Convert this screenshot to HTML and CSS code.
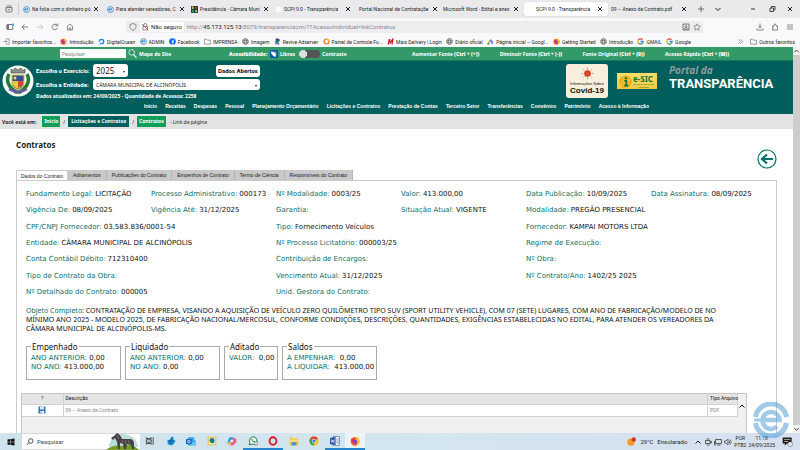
FILE: index.html
```
<!DOCTYPE html>
<html lang="pt-BR">
<head>
<meta charset="utf-8">
<title>SCPI 9.0 - Transparência</title>
<link rel="stylesheet" href="styles.css">
</head>
<body>
<svg class="sprite" aria-hidden="true">
  <symbol id="x" viewBox="0 0 8 8"><path d="M2 2l4 4M6 2l-4 4" stroke="currentColor" stroke-width="1"/></symbol>
  <symbol id="ring" viewBox="0 0 16 16"><circle cx="8" cy="8" r="6.7" fill="#fff" stroke="#4791cf" stroke-width="2.2"/><path d="M2 8h9.5a3.5 3.5 0 1 0-1 2.700" fill="none" stroke="#4791cf" stroke-width="2"/></symbol>
  <symbol id="globe" viewBox="0 0 16 16"><g fill="none" stroke="#55555c" stroke-width="1.5"><circle cx="8" cy="8" r="6.500"/><ellipse cx="8" cy="8" rx="3" ry="6.500"/><path d="M1.500 6h13M1.500 10h13"/></g></symbol>
  <symbol id="folder" viewBox="0 0 16 16"><path d="M1 3h5l2 2h7v9H1z" fill="none" stroke="#66666c" stroke-width="1.400"/></symbol>
  <symbol id="fox" viewBox="0 0 16 16"><circle cx="8" cy="8.500" r="7" fill="#ff5b2e"/><path d="M9 1c5 1 6 5 6 8a7 7 0 0 1-5 6c3-5 1-8-1-9z" fill="#ffbd2e"/><path d="M1.500 4l3 2 2-3 1 3-4 5z" fill="#f02d52"/><circle cx="8" cy="9" r="3.300" fill="#7b41d8"/></symbol>
  <symbol id="google" viewBox="0 0 16 16"><g fill="none" stroke-width="3"><path d="M12.500 4A6 6 0 0 0 2.800 5.200" stroke="#e94335"/><path d="M2.800 5.200a6 6 0 0 0 0 5.600" stroke="#fbbc04"/><path d="M2.800 10.800a6 6 0 0 0 9 2" stroke="#34a853"/><path d="M11.800 12.800A6 6 0 0 0 14 8H8" stroke="#4285f4"/></g></symbol>
  <symbol id="down" viewBox="0 0 8 8"><path d="M1.500 3L4 5.500 6.500 3" fill="none" stroke="currentColor"/></symbol>
  <symbol id="up" viewBox="0 0 8 8"><path d="M1.500 5.500L4 3l2.500 2.500" fill="none" stroke="currentColor"/></symbol>
  <symbol id="lens" viewBox="0 0 16 16"><circle cx="9.500" cy="6" r="4.500" fill="none" stroke="currentColor" stroke-width="1.500"/><path d="M6.300 9.200L1.500 14" stroke="currentColor" stroke-width="1.500"/></symbol>
</svg>

<header class="browser">
  <div class="tabstrip">
    <button class="tab-home" aria-label="Firefox View"><svg viewBox="0 0 16 16"><path d="M2 5h12v7q0 2-2 2H4q-2 0-2-2zM3 2h10M5.500 8l2.500 2 2.500-2" fill="none" stroke="#55555c" stroke-width="1.500"/></svg></button>
    <div class="tabs">
      <div class="tab"><svg class="fav"><use href="#ring"/></svg><a href="#">Na folia com o dinheiro pú</a><button aria-label="Fechar"><svg><use href="#x"/></svg></button></div>
      <div class="tab"><svg class="fav"><use href="#ring"/></svg><a href="#">Para atender vereadores, C</a><button aria-label="Fechar"><svg><use href="#x"/></svg></button></div>
      <div class="tab"><svg class="fav" viewBox="0 0 16 16"><path fill="#173a5e" d="M0 0h16v16H0z"/><path fill="#e7bd2c" d="M2 1h4v6H2zM10 9h4v5h-4z"/><path fill="#2f9b4b" d="M2 9h5v6H2z"/><path fill="#c43c32" d="M9 2h5v4H9z"/></svg><a href="#">Presidência - Câmara Muni</a><button aria-label="Fechar"><svg><use href="#x"/></svg></button></div>
      <div class="tab"><svg class="fav" viewBox="0 0 16 16"><circle cx="8" cy="8" r="7" fill="#fafafa"/></svg><a href="#">SCPI 9.0 - Transparência</a><button aria-label="Fechar"><svg><use href="#x"/></svg></button></div>
      <div class="tab"><a href="#">Portal Nacional de Contrataçõe</a><button aria-label="Fechar"><svg><use href="#x"/></svg></button></div>
      <div class="tab"><a href="#">Microsoft Word - Edital e anex</a><button aria-label="Fechar"><svg><use href="#x"/></svg></button></div>
      <div class="tab active"><svg class="fav"></svg><a href="#">SCPI 9.0 - Transparência</a><button aria-label="Fechar"><svg><use href="#x"/></svg></button></div>
      <div class="tab"><a href="#">09 – Anexo de Contrato.pdf</a><button aria-label="Fechar"><svg><use href="#x"/></svg></button></div>
    </div>
    <button class="tool" aria-label="Nova aba"><svg viewBox="0 0 8 8"><path d="M4 1v6M1 4h6" stroke="#55555c" stroke-width=".8"/></svg></button>
    <button class="tool" aria-label="Listar abas"><svg><use href="#down"/></svg></button>
    <div class="window-buttons">
      <button aria-label="Minimizar"><svg viewBox="0 0 8 8"><path d="M2 4h4" stroke="#333"/></svg></button>
      <button aria-label="Restaurar"><svg viewBox="0 0 8 8"><path d="M2 3h3.500v3.500H2zM3.500 3V1.500H7V5H5.500" fill="none" stroke="#333" stroke-width=".9"/></svg></button>
      <button aria-label="Fechar janela"><svg><use href="#x"/></svg></button>
    </div>
  </div>

  <div class="toolbar">
    <div class="nav-buttons">
      <button aria-label="Barra lateral"><svg viewBox="0 0 16 16"><rect x="1.500" y="3" width="12" height="10" rx="1.500" fill="none" stroke="#55555c" stroke-width="1.600"/><path d="M2 3h4v10H2z" fill="#77777d"/><circle cx="14" cy="3" r="2.200" fill="#13a5e8"/></svg></button>
      <button aria-label="Voltar"><svg viewBox="0 0 16 16"><path d="M14 8H2.500M7 3L2 8l5 5" fill="none" stroke="#55555c" stroke-width="1.500"/></svg></button>
      <button aria-label="Avançar"><svg viewBox="0 0 16 16"><path d="M2 8h11.500M9 3l5 5-5 5" fill="none" stroke="#bbbbc0" stroke-width="1.500"/></svg></button>
      <button aria-label="Recarregar"><svg viewBox="0 0 16 16"><path d="M13 9.500A5.500 5.500 0 1 1 12 4.500M13.500 1v4.500H9" fill="none" stroke="#55555c" stroke-width="1.500"/></svg></button>
      <button aria-label="Início"><svg viewBox="0 0 16 16"><path d="M1.500 8L8 2l6.500 6M3 7v7h10V7M6.500 14v-4h3v4" fill="none" stroke="#66666c" stroke-width="1.400"/></svg></button>
    </div>
    <div class="address">
      <svg viewBox="0 0 16 16"><path d="M8 1l6 2v4c0 4-2 6-6 8-4-2-6-4-6-8V3z" fill="none" stroke="#66666c" stroke-width="1.400"/></svg>
      <span class="security"><svg viewBox="0 0 16 16"><path d="M4 7h9v7H4zM5.500 7V4a3 3 0 0 1 6 0v3" fill="none" stroke="#66666c" stroke-width="1.500"/><path d="M2 2l13 13" stroke="#d8264e" stroke-width="1.600"/></svg>Não seguro</span>
      <span class="url">http://<b>45.173.125.13</b>:8079/transparenciacm/?7AcessoIndividual=lnkContratos</span>
      <svg viewBox="0 0 16 16"><path d="M2 2h12v12H2zM8 3v7M5 7l3 3 3-3M3 12h10" fill="none" stroke="#55555c" stroke-width="1.500"/></svg>
      <svg viewBox="0 0 16 16"><path d="M8 1.500l2 4.300 4.700.6-3.500 3.200.9 4.700L8 12l-4.100 2.300.9-4.700L1.300 6.400 6 5.800z" fill="none" stroke="#66666c" stroke-width="1.200"/></svg>
    </div>
    <div class="actions">
      <button aria-label="Downloads"><svg viewBox="0 0 16 16"><path d="M8 1v9M4.500 6.500L8 10l3.500-3.500M2 11v3h12v-3" fill="none" stroke="#55555c" stroke-width="1.400"/></svg></button>
      <button aria-label="Extensões"><svg viewBox="0 0 16 16"><path d="M3 6h3V4q0-2 2-2t2 2v2h3v8H3v-3q2 0 2-1.500T3 8z" fill="none" stroke="#55555c" stroke-width="1.400"/></svg></button>
      <button aria-label="Menu"><svg viewBox="0 0 16 16"><path d="M2 4h12M2 8h12M2 12h12" stroke="#55555c" stroke-width="1.300"/></svg></button>
    </div>
  </div>

  <nav class="bookmarks">
    <div class="bookmark-list">
      <a href="#"><svg viewBox="0 0 16 16"><path d="M6 2h8v12H6M1 8h8M6 5l3 3-3 3" fill="none" stroke="#66666c" stroke-width="1.400"/></svg>Importar favoritos...</a>
      <a href="#"><svg><use href="#fox"/></svg>Introdução</a>
      <a href="#"><svg viewBox="0 0 16 16"><path d="M3 8a5 5 0 1 1 5 5" fill="none" stroke="#1583ff" stroke-width="3"/><path d="M5 11h3v3H5zM3 13h2v2H3z" fill="#1583ff"/></svg>DigitalOcean</a>
      <a href="#"><svg><use href="#ring"/></svg>ADMIN</a>
      <a href="#"><svg viewBox="0 0 16 16"><circle cx="8" cy="8" r="7.500" fill="#0866ff"/><path d="M11 5H9.500Q8.500 5 8.500 6v9M6 8.500h5" fill="none" stroke="#fff" stroke-width="2"/></svg>Facebook</a>
      <a href="#"><svg><use href="#folder"/></svg>IMPRENSA</a>
      <a href="#"><svg><use href="#globe"/></svg>Imagem</a>
      <a href="#"><svg viewBox="0 0 16 16"><path d="M4 1h5q4 0 4 4t-4 4l4 6H9L6 9v6H3z" fill="#244a80"/><path d="M1 8l7-3v6z" fill="#3ca36d"/></svg>Revive Adserver</a>
      <a href="#"><svg viewBox="0 0 16 16"><circle cx="8" cy="8" r="5.500" fill="none" stroke="#f47b20" stroke-width="3"/><path d="M8 2.500a5.500 5.500 0 0 1 5.500 5.500" fill="none" stroke="#fbc02d" stroke-width="3"/></svg>Painel de Controle Fu...</a>
      <a href="#"><svg viewBox="0 0 16 16"><path d="M1 15L4 2h3l1 6 4-7h3l-2 14h-3l1-7-4 6H6L5 8l-1 7z" fill="#c21c24"/></svg>Mais Delivery | Login</a>
      <a href="#"><svg><use href="#globe"/></svg>Diário oficial</a>
      <a href="#"><svg viewBox="0 0 16 16"><path d="M3 13L8 4" stroke="#fbbc04" stroke-width="4"/><path d="M8 4l5 9" stroke="#4285f4" stroke-width="4"/><circle cx="3" cy="13" r="2.500" fill="#34a853"/></svg>Página inicial – Googl...</a>
      <a href="#"><svg><use href="#fox"/></svg>Getting Started</a>
      <a href="#"><svg><use href="#globe"/></svg>Introdução</a>
      <a href="#"><svg><use href="#google"/></svg>GMAIL</a>
      <a href="#"><svg><use href="#google"/></svg>Google</a>
    </div>
    <button aria-label="Mais favoritos"><svg viewBox="0 0 16 16"><path d="M3 3l5 5-5 5M8 3l5 5-5 5" fill="none" stroke="#66666c" stroke-width="1.400"/></svg></button>
    <a href="#"><svg><use href="#folder"/></svg>Outros favoritos</a>
  </nav>
</header>

<div class="viewport">
  <div class="page">
    <div class="access-bar">
      <form class="site-search"><input type="search" placeholder="Pesquisar" aria-label="Pesquisar no site"><button aria-label="Buscar" type="button"><svg viewBox="0 0 16 16"><circle cx="6.500" cy="6" r="5" fill="none" stroke="#fff" stroke-width="1.300"/><path d="M10 10l5 5.500" stroke="#fff" stroke-width="2"/></svg></button><a href="#">Mapa do Site</a></form>
      <div class="access-tools">
        <b>Acessibilidade:</b>
        <a href="#"><svg class="libras" viewBox="0 0 16 16"><rect width="16" height="16" rx="2" fill="#0b55a5"/><path d="M3 3l3 2 1-2 2 3 3 1-1 6-4-1-4-5zM10 3l3 2" fill="#fff" stroke="#fff"/></svg>Libras</a>
        <label class="contrast"><input type="checkbox">Contraste</label>
      </div>
      <div class="font-tools">
        <a href="#">Aumentar Fonte <b>(Ctrl + (+))</b></a>
        <a href="#">Diminuir Fonte <b>(Ctrl + (-))</b></a>
        <a href="#">Fonte Original <b>(Ctrl + (0))</b></a>
        <a href="#">Acesso Rápido <b>(Ctrl + (M))</b></a>
      </div>
    </div>

    <header class="masthead">
      <div class="masthead-main">
        <svg class="crest" viewBox="0 0 32 32"><circle cx="16" cy="16" r="15.500" fill="#f8f8f4"/><path d="M7 9q-5 10 7 18h4q12-8 7-18" fill="none" stroke="#257b3b" stroke-width="3.500"/><path d="M7 24q9 6 18 0" fill="none" stroke="#6a57a5" stroke-width="2.500"/><path d="M9 8V4l2 1.500L13 3l3 2 3-2 2 2.500L23 4v4z" fill="#8b918c" stroke="#3e4743" stroke-width=".6"/><path d="M10 10h12v9q-1 4-6 6-5-2-6-6z" fill="#304e9c" stroke="#d9c342"/><path d="M10.500 16h11v3q-2 3-5.500 5-4-2-5.500-5z" fill="#e9ce32"/><path d="M16 16h5v4l-5 3z" fill="#c94b3e"/><circle cx="13" cy="13" r="1.500" fill="#f1df60"/></svg>
        <div class="chooser">
          <div class="chooser-row"><label for="year">Escolha o Exercício:</label><span class="select year"><select id="year"><option>2025</option></select></span><button class="open-data">Dados Abertos</button></div>
          <div class="chooser-row"><label for="entity">Escolha a Entidade:</label><span class="select entity"><select id="entity"><option>CÂMARA MUNICIPAL DE ALCINÓPOLIS</option></select></span></div>
          <p>Dados atualizados em: 24/09/2025 - Quantidade de Acessos: 2258</p>
        </div>
        <a class="covid" href="#"><svg viewBox="0 0 16 16"><circle cx="8" cy="8" r="4" fill="#d8341e"/><path d="M8 1v14M1 8h14M3 3l10 10M13 3L3 13" stroke="#df5a3d" stroke-width="1" stroke-dasharray="1.500 1"/></svg><small>Informações Sobre</small><b>Covid-19</b></a>
        <a class="esic" href="#"><svg viewBox="0 0 16 16"><circle cx="8" cy="8" r="7" fill="#f6b91d" stroke="#e19818"/><path d="M4 13l-1 3 4-2z" fill="#e9a91b"/><circle cx="8.500" cy="4" r="1.500" fill="#16713b"/><path d="M6.500 7H9v6M6.500 13h5" fill="none" stroke="#16713b" stroke-width="2"/></svg><span><b>e-SIC</b><small>Serviço de Informação<br>ao Cidadão</small></span></a>
        <div class="brand"><i>Portal da</i><b>TRANSPARÊNCIA</b></div>
      </div>
      <nav class="menu">
        <a href="#">Início</a><a href="#">Receitas</a><a href="#">Despesas</a><a href="#">Pessoal</a><a href="#">Planejamento Orçamentário</a><a href="#">Licitações e Contratos</a><a href="#">Prestação de Contas</a><a href="#">Terceiro Setor</a><a href="#">Transferências</a><a href="#">Convênios</a><a href="#">Patrimônio</a><a href="#">Acesso à Informação</a>
      </nav>
    </header>

    <nav class="crumbs"><b>Você está em:</b><a href="#">Início</a><span>/</span><a class="dark" href="#">Licitações e Contratos</a><span>/</span><a href="#">Contratos</a><span class="here">- Link da página</span></nav>

    <main>
      <div class="title-row">
        <h1>Contratos</h1>
        <button class="back" aria-label="Voltar à página anterior"><svg viewBox="0 0 20 20"><circle cx="10" cy="10" r="9" fill="#fff" stroke="#08706c" stroke-width="1.200"/><path d="M16 10H5.500M10 5.500L5 10l5 4.500" fill="none" stroke="#08706c" stroke-width="2.200"/></svg></button>
      </div>
      <div class="panel-tabs">
        <button class="current">Dados do Contrato</button><button>Aditamentos</button><button>Publicações do Contrato</button><button>Empenhos de Contrato</button><button>Termo de Ciência</button><button>Responsíveis do Contrato</button>
      </div>
      <section class="panel">
        <dl class="fields">
          <div><dt>Fundamento Legal:</dt><dd>LICITAÇÃO</dd></div>
          <div><dt>Processo Administrativo:</dt><dd>000173</dd></div>
          <div><dt>Nº Modalidade:</dt><dd>0003/25</dd></div>
          <div><dt>Valor:</dt><dd>413.000,00</dd></div>
          <div><dt>Data Publicação:</dt><dd>10/09/2025</dd></div>
          <div><dt>Data Assinatura:</dt><dd>08/09/2025</dd></div>
          <div><dt>Vigência De:</dt><dd>08/09/2025</dd></div>
          <div><dt>Vigência Até:</dt><dd>31/12/2025</dd></div>
          <div><dt>Garantia:</dt><dd></dd></div>
          <div><dt>Situação Atual:</dt><dd>VIGENTE</dd></div>
          <div class="wide"><dt>Modalidade:</dt><dd>PREGÃO PRESENCIAL</dd></div>
          <div class="wide"><dt>CPF/CNPJ Fornecedor:</dt><dd>03.583.836/0001-54</dd></div>
          <div class="wide"><dt>Tipo:</dt><dd>Fornecimento Veículos</dd></div>
          <div class="wide"><dt>Fornecedor:</dt><dd>KAMPAI MOTORS LTDA</dd></div>
          <div class="wide"><dt>Entidade:</dt><dd>CÂMARA MUNICIPAL DE ALCINÓPOLIS</dd></div>
          <div class="wide"><dt>Nº Processo Licitatório:</dt><dd>000003/25</dd></div>
          <div class="wide"><dt>Regime de Execução:</dt><dd></dd></div>
          <div class="wide"><dt>Conta Contábil Débito:</dt><dd>712310400</dd></div>
          <div class="wide"><dt>Contribuição de Encargos:</dt><dd></dd></div>
          <div class="wide"><dt>Nº Obra:</dt><dd></dd></div>
          <div class="wide"><dt>Tipo de Contrato da Obra:</dt><dd></dd></div>
          <div class="wide"><dt>Vencimento Atual:</dt><dd>31/12/2025</dd></div>
          <div class="wide"><dt>Nº Contrato/Ano:</dt><dd>1402/25 2025</dd></div>
          <div class="wide"><dt>Nº Detalhado do Contrato:</dt><dd>000005</dd></div>
          <div class="wide"><dt>Unid. Gestora do Contrato:</dt><dd></dd></div>
        </dl>
        <p class="object"><span>Objeto Completo:</span> CONTRATAÇÃO DE EMPRESA, VISANDO A AQUISIÇÃO DE VEÍCULO ZERO QUILÔMETRO TIPO SUV (SPORT UTILITY VEHICLE), COM 07 (SETE) LUGARES, COM ANO DE FABRICAÇÃO/MODELO DE NO MÍNIMO ANO 2025 - MODELO 2025, DE FABRICAÇÃO NACIONAL/MERCOSUL, CONFORME CONDIÇÕES, DESCRIÇÕES, QUANTIDADES, EXIGÊNCIAS ESTABELECIDAS NO EDITAL, PARA ATENDER OS VEREADORES DA CÂMARA MUNICIPAL DE ALCINÓPOLIS-MS.</p>
        <div class="totals">
          <fieldset><legend>Empenhado</legend><p><span>ANO ANTERIOR:</span> 0,00</p><p><span>NO ANO:</span> 413.000,00</p></fieldset>
          <fieldset><legend>Liquidado</legend><p><span>ANO ANTERIOR:</span> 0,00</p><p><span>NO ANO:</span> 0,00</p></fieldset>
          <fieldset class="narrow"><legend>Aditado</legend><p><span>VALOR:</span>&nbsp; 0,00</p></fieldset>
          <fieldset><legend>Saldos</legend><p><span>A EMPENHAR:</span>&nbsp; 0,00</p><p><span>A LIQUIDAR:</span>&nbsp; 413.000,00</p></fieldset>
        </div>
        <div class="files">
          <table>
            <thead><tr><th class="get">?</th><th>Descrição</th><th class="type">Tipo Arquivo</th></tr></thead>
            <tbody><tr><td class="get"><button aria-label="Baixar"><svg viewBox="0 0 16 16"><path d="M1 1h12l2 2v12H1z" fill="#2e74b8"/><path d="M4 1h8v6H4z" fill="#dcecf7"/><path d="M4 10h8v5H4z" fill="#fff"/><path d="M5 11h2v4H5z" fill="#2e74b8"/></svg></button></td><td>09 – Anexo de Contrato</td><td>PDF</td></tr></tbody>
          </table>
          <div class="files-scroll"><svg><use href="#up"/></svg></div>
        </div>
      </section>
    </main>
  </div>
  <div class="scrollbar"><svg><use href="#up"/></svg><span></span><svg><use href="#down"/></svg></div>
</div>

<footer class="taskbar">
  <button class="start" aria-label="Iniciar"><svg viewBox="0 0 16 16"><path d="M1 3l6-1v5.500H1zM8 2l7-1v6.500H8zM1 8.500h6V14l-6-1zM8 8.500h7V15l-7-1z" fill="#111"/></svg></button>
  <div class="search-box"><label for="os-search"><svg><use href="#lens"/></svg></label><input id="os-search" type="text" placeholder="Pesquisar"><svg class="zebra" viewBox="0 0 34 17"><path d="M3 12Q6 0 18 1q13 2 14 13H3z" fill="#b9e0dc"/><path d="M0 17q7-6 16-4 9-4 17 4z" fill="#769c27"/><path d="M8 3l3-3 3 2 2 4h9q3 1 3 5v5h-2l-1-4-4-1-1 5h-2l-1-5-3-1v6h-2l-1-7-2-4-2 2-2-2z" fill="#4a4048"/><path d="M16 7l1 4M19 7l1 4M22 7l1 3M11 2l2 4" stroke="#8b7d80" stroke-width=".7"/></svg></div>
  <div class="apps">
    <button aria-label="Visão de tarefas"><svg viewBox="0 0 16 16"><path d="M2 2v2h8V2M2 14v-2h8v2M2 6h8v4H2zM13 2v12" fill="none" stroke="#333" stroke-width="1.300"/></svg></button>
    <button aria-label="Configurador"><svg viewBox="0 0 16 16"><path d="M2 7l5-2 1-4 4 1v4l3 1-2 5-4 3-6-2z" fill="#168ac8"/><path d="M4 9l7-2M7 13l1-8" stroke="#0c5484"/></svg></button>
    <button aria-label="Outlook"><svg viewBox="0 0 16 16"><path d="M3 2h10v4l3 2v7H3z" fill="#34a4e4"/><path d="M3 15l13-7v7z" fill="#65c8f1"/><path d="M0 5h9v8H0z" fill="#0866b6"/><circle cx="4.500" cy="9" r="2" fill="none" stroke="#fff" stroke-width="1.300"/></svg></button>
    <button aria-label="Imagens"><svg viewBox="0 0 16 16"><path d="M1 1h14v14H1z" fill="#e9c54e"/><path d="M3 3h10v10H3z" fill="#e7f3ef"/><circle cx="8" cy="7" r="4" fill="#1d6aa4"/><path d="M4 8l4-2 4 4-3 2z" fill="#2b8650"/></svg></button>
    <button aria-label="Copilot"><svg viewBox="0 0 16 16"><path d="M5 2h5l2 4-5 6H2Q0 12 1 9l2-5q1-2 2-2z" fill="#219de0"/><path d="M9 3h3q2 0 3 3t-2 6-4 3H5l3-5z" fill="#ee5f90"/><path d="M1 9l5 1-1 5q-4-1-4-6z" fill="#f5b53b"/><path d="M6 6h4L9 10H5z" fill="#fff"/></svg></button>
    <button class="running" aria-label="WhatsApp"><svg viewBox="0 0 16 16"><path d="M2 14l1-4a6 6 0 1 1 3 3z" fill="#eef8ef" stroke="#15804a" stroke-width="1.600"/><path d="M5.500 5q0 4 5 5l1-1.500-2-1-1 1L7 7l.5-1L6.500 4z" fill="#15804a"/><circle cx="13" cy="12" r="3" fill="#ddd" stroke="#555" stroke-width=".7"/></svg></button>
    <button class="running" aria-label="Opera"><svg viewBox="0 0 16 16"><ellipse cx="8" cy="8" rx="5.500" ry="6" fill="none" stroke="#e5142a" stroke-width="3"/></svg></button>
    <button aria-label="Explorador"><svg viewBox="0 0 16 16"><path d="M1 2h5l1 2h8v11H1z" fill="#f7ca45"/><path d="M4 10h8v5H4z" fill="#3f93cf"/><path d="M1 6h14v3H1z" fill="#ffdf7d"/></svg></button>
    <button aria-label="Chrome"><svg viewBox="0 0 16 16"><circle cx="8" cy="8" r="7.500" fill="#f5c230"/><path d="M8 8L1.500 4.500a7.500 7.500 0 0 1 13 0z" fill="#e33d31"/><path d="M8 8L1.500 4.500A7.500 7.500 0 0 0 7.500 15.500z" fill="#36a355"/><circle cx="8" cy="8" r="3.500" fill="#fff"/><circle cx="8" cy="8" r="2.700" fill="#357de5"/></svg></button>
    <button class="running" aria-label="Word"><svg viewBox="0 0 16 16"><path d="M5 1h10v14H5z" fill="#fff" stroke="#2b579a"/><path d="M0 3l9-1.500v13L0 13z" fill="#2b579a"/><path d="M2 5.500l1 5 1.500-4 1.500 4 1-5" fill="none" stroke="#fff"/><path d="M10 5h4M10 8h4M10 11h4" stroke="#2b579a"/></svg></button>
    <button class="running focused" aria-label="Firefox"><svg><use href="#fox"/></svg></button>
  </div>
  <div class="tray">
    <a class="weather" href="#"><svg viewBox="0 0 16 16"><circle cx="7" cy="9" r="6.500" fill="#f69a20"/><circle cx="12" cy="4.500" r="4" fill="#d3352c"/></svg><span>29°C</span><span>Ensolarado</span></a>
    <div class="tray-icons">
      <svg><use href="#up"/></svg>
      <svg viewBox="0 0 16 16"><path d="M3 5h9v6H3zM5 2h6M5 14h6M12 7h3v3h-3" fill="none" stroke="#333" stroke-width="1.500"/></svg>
      <svg viewBox="0 0 16 16"><path d="M3 3h12v8H3zM6 14h7M1 6v8h3" fill="none" stroke="#333" stroke-width="1.500"/></svg>
      <svg viewBox="0 0 16 16"><path d="M1 6h3l4-4v12l-4-4H1zM10 5q3 3 0 6M12 3q5 5 0 10" fill="none" stroke="#333" stroke-width="1.300"/></svg>
    </div>
    <span class="stack">POR<br>PTB2</span>
    <span class="stack clock">11:18<br>24/09/2025</span>
    <button class="notice" aria-label="Notificações"><svg viewBox="0 0 16 16"><path d="M1 2h13v9H7l-3 3v-3H1z" fill="#1b1b1b"/><path d="M3 5h9M3 8h6" stroke="#ddd"/><circle cx="12" cy="12" r="3.500" fill="#e5e9ef" stroke="#555" stroke-width=".7"/></svg></button>
  </div>
</footer>
<svg class="watermark" viewBox="0 0 36 36" aria-hidden="true"><g fill="none" stroke="#4595d2"><path d="M2.500 15A15.700 15.700 0 0 1 33.500 15M2.500 21A15.700 15.700 0 0 0 33.500 21" stroke-width="5"/><path d="M12 18h14.500A8.500 8.500 0 1 0 24 24.500" stroke-width="4.500"/><path d="M1 18h9" stroke-width="3"/></g></svg>
</body>
</html>
```
FILE: styles.css
```
:root {
  --teal: #005f5c;
  --green: #339966;
  --ink: #1f1f22;
  --ui: Roboto, "Noto Sans", sans-serif;
  --text: "Noto Sans", sans-serif;
}
* { box-sizing: border-box; }
body {
  margin: 0;
  height: 100vh;
  display: flex;
  flex-direction: column;
  overflow: hidden;
  font-family: var(--ui);
  font-size: 5px;
  line-height: 8px;
  color: var(--ink);
  background: #fff;
}
button, input, select { font: inherit; color: inherit; border: 0; padding: 0; margin: 0; background: none; }
a { color: inherit; text-decoration: none; }
p, h1, dl, dd { margin: 0; }
svg { display: block; flex: none; width: 8px; height: 8px; }
.sprite { position: absolute; width: 0; height: 0; }
button { display: grid; place-items: center; }

/* browser chrome */
.browser { flex: none; }
.tabstrip { display: flex; align-items: center; height: 18px; background: #eaeaed; }
.tab-home { width: 19px; height: 12px; border-right: 1px solid #c9c9cf; }
.tabs { display: flex; flex: 0 1 672px; margin-left: 1px; min-width: 0; }
.tab { flex: 1 1 0; min-width: 0; display: flex; align-items: center; gap: 2px; height: 14px; padding: 0 4px 0 3px; border-radius: 2px; }
.tab.active { background: #fff; box-shadow: 0 0 1px #aaa; }
.tab .fav { width: 7px; height: 7px; }
.tab a { flex: 1; white-space: nowrap; }
.tool { width: 17px; }
.window-buttons { display: flex; justify-content: space-between; margin-left: auto; width: 57px; padding: 0 6px; }

.toolbar { display: flex; align-items: center; height: 18px; background: #f9f9fb; }
.nav-buttons { display: flex; gap: 7px; padding-left: 6px; width: 126px; }
.address { flex: 1; display: flex; align-items: center; gap: 3px; height: 12px; padding: 0 2px 0 3px; border-radius: 2px; background: #ededf0; font-size: 6px; }
.security { display: flex; align-items: center; gap: 2px; height: 10px; padding: 0 2px 0 1px; border-radius: 2px; background: #fff; }
.url { flex: 1; color: #8a8a92; white-space: nowrap; }
.url b { font-weight: 400; color: var(--ink); }
.actions { display: flex; justify-content: space-between; width: 97px; padding: 0 6px 0 53px; }

.bookmarks { display: flex; align-items: center; height: 11px; padding: 0 5px 0 3px; background: #f9f9fb; white-space: nowrap; }
.bookmark-list { display: flex; justify-content: space-between; flex: 0 1 688px; }
.bookmarks a { display: flex; align-items: center; gap: 2px; }
.bookmarks svg { width: 7px; height: 7px; }
.bookmarks > button { margin-left: auto; margin-right: 6px; }

/* page frame */
.viewport { flex: 1; min-height: 0; display: flex; }
.page { flex: 1; min-width: 0; overflow: hidden; font-family: var(--text); }
.scrollbar { width: 7px; display: flex; flex-direction: column; background: #f0f0f0; }
.scrollbar span { flex: 1; background: #cdcdcd; }
.scrollbar svg { width: 7px; }

.access-bar { display: flex; align-items: center; height: 14px; padding-left: 60px; background: var(--green); border-bottom: 1px solid #14795f; color: #fff; white-space: nowrap; font-weight: 700; }
.site-search { display: flex; align-items: center; gap: 2px; width: 169px; }
.site-search input { width: 66px; height: 9px; padding: 0 2px; background: #fff; color: #333; font-weight: 400; }
.site-search input::placeholder { color: #777; }
.site-search svg { width: 9px; height: 9px; }
.access-tools { display: flex; align-items: center; gap: 4px; width: 183px; }
.access-tools b { width: 37px; }
.access-tools a, .contrast { display: flex; align-items: center; gap: 2px; }
.contrast input { appearance: none; margin: 0; width: 21px; height: 8px; border-radius: 4px; background: radial-gradient(circle at 4px 4px, #ddd 4px, #555 4px); }
.font-tools { flex: 1; display: flex; justify-content: space-between; margin-right: 64px; }

/* masthead */
.masthead { height: 53px; background: var(--teal); color: #fff; }
.masthead-main { display: flex; align-items: flex-start; height: 41px; padding: 3px 16px 0 2px; }
.crest { width: 32px; height: 32px; margin-top: 1px; }
.chooser { width: 224px; margin-left: 2px; display: grid; gap: 1px; font-size: 6px; font-weight: 700; white-space: nowrap; }
.chooser-row { display: flex; align-items: center; height: 13px; }
.chooser-row label { width: 57px; font-family: var(--ui); }
.chooser p { font-size: 5px; }
.select { position: relative; display: block; border-radius: 3px; background: #fff; color: #222; font-weight: 400; }
.select::after { content: ""; position: absolute; right: 3px; top: 50%; border: 1px solid transparent; border-top: 2px solid #222; }
.select select { appearance: none; display: block; width: 100%; height: 100%; padding-left: 3px; }
.year { width: 35px; height: 13px; font-size: 8px; }
.entity { width: 167px; height: 11px; font-size: 5px; }
.open-data { width: 44px; height: 12px; margin-left: auto; border-radius: 3px; background: #fff; color: #111; font-family: var(--ui); font-size: 6px; font-weight: 700; }
.covid { display: grid; justify-items: center; align-content: start; margin-left: auto; width: 42px; height: 34px; border-radius: 3px; background: #f7eedb; color: #111; font-family: "Liberation Sans", sans-serif; }
.covid svg { width: 13px; height: 13px; margin-top: 3px; }
.covid small { font-size: 4px; line-height: 7px; }
.covid b { font-size: 8px; line-height: 8px; font-weight: 700; }
.esic { display: flex; align-items: center; gap: 1px; width: 40px; height: 16px; margin: 9px 12px 0 9px; padding-left: 2px; background: linear-gradient(#f8e06d, #f2c940); color: #16713b; }
.esic svg { width: 13px; height: 13px; }
.esic b { display: block; font-size: 8px; line-height: 9px; }
.esic small { display: block; font-size: 2px; line-height: 3px; text-align: center; }
.brand { display: grid; width: 108px; font-family: var(--ui); line-height: 14px; }
.brand i { font: italic 700 10px/13px "Open Sans", sans-serif; color: #8f9b9a; }
.brand b { font-size: 13px; }
.menu { display: flex; justify-content: space-between; margin: 0 144px; font-size: 5px; font-weight: 700; white-space: nowrap; font-family: "Liberation Sans", sans-serif; }

.crumbs { display: flex; align-items: center; gap: 3px; height: 15px; padding-left: 2px; background: #e3e3e3; white-space: nowrap; }
.crumbs b { margin-right: 3px; }
.crumbs a { height: 11px; padding: 0 2px; line-height: 11px; background: #109e5a; color: #fff; font-weight: 700; }
.crumbs a.dark { padding: 0 3px; background: var(--teal); }
.crumbs .here { margin-left: 1px; }

/* contract */
main { padding: 0 16px; }
.title-row { display: flex; justify-content: space-between; height: 41px; }
h1 { margin-top: 11px; font-family: var(--text); font-size: 8px; line-height: 10px; font-weight: 700; }
.back { margin-top: 20px; align-self: start; }
.back svg { width: 20px; height: 20px; }
.panel-tabs { display: flex; font-family: "Liberation Sans", sans-serif; font-size: 5px; line-height: 10px; }
.panel-tabs button { height: 10px; padding: 0 5px; border-right: 1px solid #b5b5b5; background: #c9c9c9; color: #222; }
.panel-tabs .current { padding: 0 4px; background: #fff; border: 1px solid #ccc; border-bottom: 0; }
.panel { padding: 5px 0 0 9px; height: 400px; border: 1px solid #ccc; font-family: "DejaVu Sans", sans-serif; font-size: 7px; color: #111; }
.fields { display: grid; grid-template-columns: repeat(6, 1fr); grid-template-rows: repeat(7, 1fr); height: 114px; white-space: nowrap; }
.fields div { display: flex; align-items: center; gap: 2px; }
.fields .wide { grid-column: span 2; }
.fields dt, .object span, .totals span { color: #08706c; }
.object { margin: 6px 46px 0 0; font-family: var(--text); line-height: 9px; }
.totals { display: flex; gap: 4px; margin-top: 9px; line-height: 9px; white-space: nowrap; }
.totals fieldset { min-width: 0; width: 95px; height: 34px; margin: 0; padding: 3px 4px 0; border: 1px solid #aaa; }
.totals .narrow { width: 54px; }
.totals legend { padding: 0 1px; font-family: var(--text); font-size: 8px; line-height: 9px; }
.files { display: flex; margin: 13px 29px 0 -5px; height: 100px; border: 1px solid #c5c5c5; background: #f0f0f0; font-family: var(--ui); font-size: 5px; }
.totals fieldset { height: 38px; }
table { flex: 1; width: 100%; align-self: flex-start; border-collapse: collapse; table-layout: fixed; background: #fff; line-height: 7px; }
th, td { height: 10px; padding: 0 2px; border: 1px solid #d2d2d2; border-left: 0; border-top: 0; text-align: left; font-weight: 400; }
th { background: #e5e5e5; }
td { height: 12px; color: #888; }
.get { width: 41px; text-align: center; }
td button { margin: auto; }
.type { width: 30px; white-space: nowrap; }
.files-scroll { width: 8px; padding-top: 8px; }

/* taskbar */
.taskbar { flex: none; display: flex; align-items: center; height: 17px; background: linear-gradient(90deg, #cfe3ec, #d3e6ef 50%, #d6e0f0); font-size: 6px; white-space: nowrap; }
.start { width: 21px; }
.search-box { display: flex; align-items: center; width: 119px; height: 17px; padding-left: 4px; background: #fff; border: 1px solid #d6d6d6; border-right: 0; }
.search-box input { flex: 1; min-width: 0; margin-left: 3px; }
.search-box input::placeholder { color: #444; }
.zebra { width: 34px; height: 17px; }
.apps { display: flex; flex: 0 1 225px; justify-content: space-between; }
.apps button { width: 20px; height: 17px; border-bottom: 2px solid transparent; }
.apps svg { width: 10px; height: 10px; }
.apps .running { border-bottom-color: #2585d0; }
.apps .focused { background: #edf4f8; }
.tray { display: flex; align-items: center; margin-left: auto; margin-right: 7px; }
.weather { display: flex; align-items: center; gap: 4px; margin-right: 7px; }
.weather svg { width: 9px; height: 9px; }
.tray-icons { display: flex; gap: 2px; margin-right: 2px; }
.stack { font-size: 5px; line-height: 7px; text-align: center; }
.clock { margin: 0 7px 0 2px; }
.notice svg { width: 11px; height: 11px; }
.watermark { position: fixed; right: 11px; bottom: 12px; width: 36px; height: 36px; opacity: .5; }
```
